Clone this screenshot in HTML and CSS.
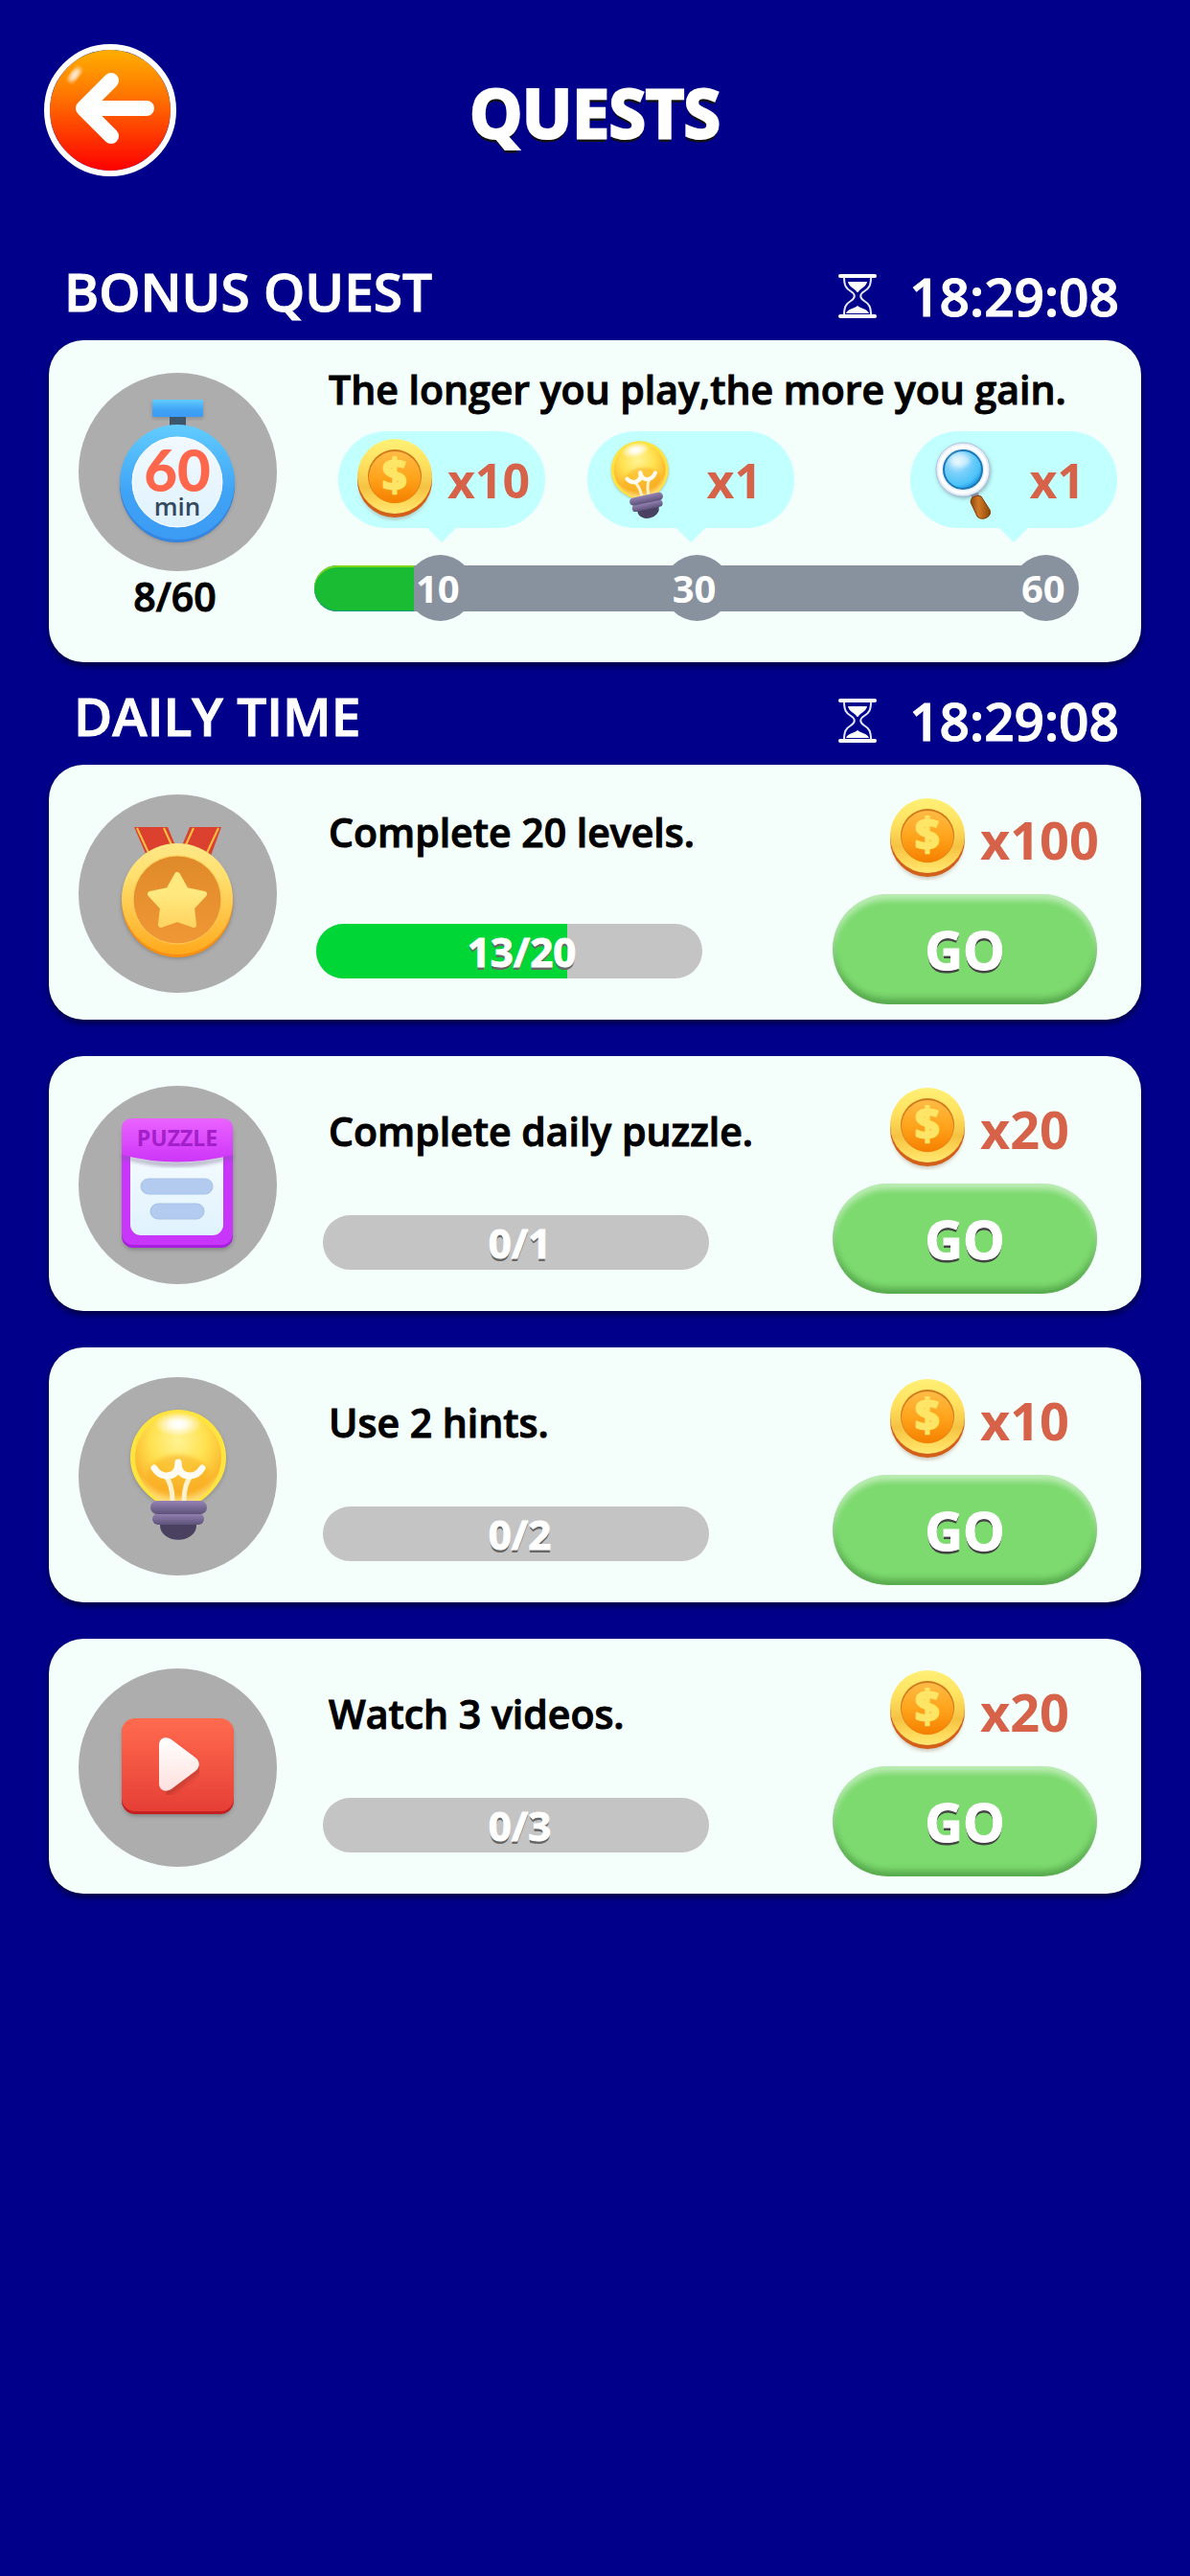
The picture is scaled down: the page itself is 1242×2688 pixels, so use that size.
FILE: index.html
```html
<!DOCTYPE html>
<html lang="en">
<head>
    <meta charset="UTF-8">
    <meta name="viewport" content="width=device-width, initial-scale=1.0">
    <title>Quests</title>
    <link rel="stylesheet" href="styles.css">
</head>
<body>
    <!-- shared icons -->
    <svg class="sprite" aria-hidden="true">
        <defs>
            <linearGradient id="coin-rim" x1="0" y1="0" x2="0" y2="1">
                <stop offset="0" stop-color="#fff176"/>
                <stop offset="0.35" stop-color="#ffe05e"/>
                <stop offset="0.65" stop-color="#f5c243"/>
                <stop offset="0.85" stop-color="#ffd95a"/>
                <stop offset="1" stop-color="#ffe873"/>
            </linearGradient>
            <linearGradient id="coin-face" x1="0" y1="0" x2="0" y2="1">
                <stop offset="0" stop-color="#ffbb45"/>
                <stop offset="0.5" stop-color="#ffa41c"/>
                <stop offset="1" stop-color="#f57f00"/>
            </linearGradient>
            <radialGradient id="glass" cx="0.5" cy="0.3" r="0.72">
                <stop offset="0" stop-color="#fff394"/>
                <stop offset="0.45" stop-color="#ffe14f"/>
                <stop offset="0.8" stop-color="#fbb72e"/>
                <stop offset="1" stop-color="#ffe488"/>
            </radialGradient>
            <radialGradient id="shine">
                <stop offset="0" stop-color="#fff"/>
                <stop offset="0.3" stop-color="#fff" stop-opacity="0.9"/>
                <stop offset="1" stop-color="#fff" stop-opacity="0"/>
            </radialGradient>
            <linearGradient id="bulb-base" x1="0" y1="0" x2="0" y2="1">
                <stop offset="0" stop-color="#9583b5"/>
                <stop offset="1" stop-color="#5d5279"/>
            </linearGradient>
            <filter id="soft"><feGaussianBlur stdDeviation="2"/></filter>
        </defs>
        <symbol id="coin" viewBox="0 0 78 86">
            <ellipse cx="39" cy="46" rx="37" ry="38" fill="#7a4a2a" opacity="0.35" filter="url(#soft)"/>
            <circle cx="39" cy="43" r="39" fill="#d2601a"/>
            <circle cx="39" cy="39" r="39" fill="url(#coin-rim)"/>
            <circle cx="39" cy="39" r="28" fill="#cf7a1d"/>
            <circle cx="39" cy="40" r="27" fill="url(#coin-face)"/>
            <text class="coin-sign" x="39" y="55" text-anchor="middle">$</text>
        </symbol>
        <symbol id="bulb" viewBox="44 24 120 155">
            <path d="M104 36a50 50 0 0 0-50 50c0 22 13 35 28 46h44c15-11 28-24 28-46a50 50 0 0 0-50-50z" fill="#555" opacity="0.35" filter="url(#soft)"/>
            <path d="M104 34a50 50 0 0 0-50 50c0 21 13 36 29 47h42c16-11 29-26 29-47a50 50 0 0 0-50-50z" fill="#ffe33f"/>
            <path d="M104 39a45 45 0 0 0-45 45c0 19 12 35 28 47h34c16-12 28-28 28-47a45 45 0 0 0-45-45z" fill="url(#glass)"/>
            <ellipse cx="104" cy="103" rx="32" ry="22" fill="#f9a81b" opacity="0.5" filter="url(#soft)"/>
            <ellipse cx="104" cy="49" rx="25" ry="13" fill="url(#shine)"/>
            <path d="M90 102q8 9 8 27M118 102q-8 9-8 27" fill="none" stroke="#fff3cf" stroke-width="5"/>
            <path d="M79 95q5 8 13 8 12 0 12-14 0 14 12 14 8 0 13-8" fill="none" stroke="#fffdf3" stroke-width="7" stroke-linecap="round" stroke-linejoin="round"/>
            <path d="M85 152h38v3a18 14 0 0 1-38 0z" fill="#4a4060"/>
            <rect x="77" y="142" width="54" height="12" rx="6" fill="url(#bulb-base)"/>
            <rect x="75" y="129" width="59" height="14" rx="7" fill="url(#bulb-base)"/>
        </symbol>
        <symbol id="hourglass" viewBox="0 0 40 46">
            <path d="M2 2h36M2 44h36" stroke="#fff" stroke-width="4" stroke-linecap="round"/>
            <path d="M6 3c0 9 2 12 7 15 5 3 5 7 0 10-5 3-7 6-7 15M34 3c0 9-2 12-7 15-5 3-5 7 0 10 5 3 7 6 7 15" fill="none" stroke="#e6e6ff" stroke-width="2"/>
            <path d="M10 8h20c-1 5-5 6-8 9-1 1-1 2-2 2s-1-1-2-2c-3-3-7-4-8-9zM8 41c2-5 9-5 12-8 3 3 10 3 12 8z" fill="#fff"/>
        </symbol>
    </svg>

    <header class="topbar">
        <button type="button" class="back" aria-label="Back">
            <svg viewBox="0 0 126 126" aria-hidden="true">
                <ellipse cx="26" cy="26" rx="4" ry="9" transform="rotate(38 26 26)" fill="#fff" opacity="0.85" filter="url(#soft)"/>
                <path d="M101 61H36M64 32L35 61l29 29" fill="none" stroke="#fff" stroke-width="16" stroke-linecap="round" stroke-linejoin="round"/>
            </svg>
        </button>
        <h1>QUESTS</h1>
    </header>

    <main>
        <div class="section-head">
            <h2>BONUS QUEST</h2>
            <div class="countdown">
                <svg class="hourglass" aria-hidden="true"><use href="#hourglass"/></svg>
                <time>18:29:08</time>
            </div>
        </div>

        <section class="card bonus">
            <div class="bonus-side">
                <div class="disc">
                    <svg viewBox="0 0 207 207" aria-label="60 min">
                        <defs>
                            <linearGradient id="watch" x1="0" y1="0" x2="0" y2="1">
                                <stop offset="0" stop-color="#62ccff"/>
                                <stop offset="0.6" stop-color="#3fa3f5"/>
                                <stop offset="1" stop-color="#3c9bf4"/>
                            </linearGradient>
                            <linearGradient id="dial" x1="0" y1="0" x2="0" y2="1">
                                <stop offset="0" stop-color="#f2f9ff"/>
                                <stop offset="1" stop-color="#dff2fd"/>
                            </linearGradient>
                        </defs>
                        <rect x="77" y="30" width="53" height="18" fill="#666" opacity="0.4" filter="url(#soft)"/>
                        <rect x="95" y="44" width="17" height="12" fill="#3d566b"/>
                        <rect x="77" y="28" width="53" height="18" rx="1" fill="url(#watch)"/>
                        <circle cx="103" cy="118" r="59" fill="#555" opacity="0.5" filter="url(#soft)"/>
                        <circle cx="103" cy="117" r="60" fill="#3585e0"/>
                        <circle cx="103" cy="114" r="60" fill="url(#watch)"/>
                        <circle cx="103" cy="114" r="47" fill="url(#dial)" stroke="#fff"/>
                        <text class="watch-number" x="103" y="124" text-anchor="middle">60</text>
                        <text class="watch-unit" x="103" y="149" text-anchor="middle">min</text>
                    </svg>
                </div>
                <p class="bonus-count">8/60</p>
            </div>
            <div class="bonus-body">
                <h3>The longer you play,the more you gain.</h3>
                <ul class="rewards">
                    <li><svg class="coin" aria-hidden="true"><use href="#coin"/></svg><span>x10</span></li>
                    <li>
                        <svg class="small-icon" viewBox="0 0 74 84" aria-hidden="true">
                            <g transform="rotate(-12 37 42)"><use href="#bulb" x="1" y="-5" width="72" height="93"/></g>
                        </svg>
                        <span>x1</span>
                    </li>
                    <li>
                        <svg class="small-icon" viewBox="0 0 74 84" aria-hidden="true">
                            <defs>
                                <radialGradient id="lens" cx="0.35" cy="0.3" r="0.75">
                                    <stop offset="0" stop-color="#d6f1ff"/>
                                    <stop offset="0.4" stop-color="#7bd0fa"/>
                                    <stop offset="0.8" stop-color="#4cc3f8"/>
                                    <stop offset="1" stop-color="#1c8fdc"/>
                                </radialGradient>
                                <linearGradient id="wood" x1="0" y1="0" x2="1" y2="0">
                                    <stop offset="0" stop-color="#8f4708"/>
                                    <stop offset="0.4" stop-color="#d07a28"/>
                                    <stop offset="1" stop-color="#8f4708"/>
                                </linearGradient>
                            </defs>
                            <circle cx="36" cy="33" r="28" fill="#456" opacity="0.45" filter="url(#soft)"/>
                            <circle cx="35" cy="31" r="28" fill="#e9effa" stroke="#b4c3d8"/>
                            <circle cx="35" cy="31" r="24" fill="none" stroke="#fff" stroke-width="3"/>
                            <circle cx="35" cy="31" r="20" fill="url(#lens)" stroke="#1878b8" stroke-width="2"/>
                            <ellipse cx="32" cy="21" rx="11" ry="7" fill="#fff" opacity="0.5" filter="url(#soft)"/>
                            <rect x="44" y="56" width="8" height="6" fill="#8b8fa6" transform="rotate(-20 48 59)"/>
                            <path d="M45 60q5-3 9-1l9 14q2 5-3 8-6 3-10-1l-7-15q0-3 2-5z" fill="url(#wood)" stroke="#7d3f0a"/>
                        </svg>
                        <span>x1</span>
                    </li>
                </ul>
                <div class="track" role="progressbar" aria-label="Minutes played" aria-valuenow="8" aria-valuemin="0" aria-valuemax="60">
                    <div class="milestone" style="left: 16.5%">10</div>
                    <div class="milestone" style="left: 50%">30</div>
                    <div class="milestone" style="left: 95.6%">60</div>
                    <div class="track-fill" style="width: 13%"></div>
                </div>
            </div>
        </section>

        <div class="section-head daily">
            <h2>DAILY TIME</h2>
            <div class="countdown">
                <svg class="hourglass" aria-hidden="true"><use href="#hourglass"/></svg>
                <time>18:29:08</time>
            </div>
        </div>

        <div class="quest-list">
            <section class="card quest started">
                <div class="disc">
                    <svg viewBox="0 0 207 207" aria-hidden="true">
                        <defs>
                            <linearGradient id="medal-rim" x1="0" y1="0" x2="0" y2="1">
                                <stop offset="0" stop-color="#ffe787"/>
                                <stop offset="0.3" stop-color="#ffdf6e"/>
                                <stop offset="1" stop-color="#ffa91c"/>
                            </linearGradient>
                            <linearGradient id="medal-face" x1="0" y1="0" x2="0" y2="1">
                                <stop offset="0" stop-color="#df8a2a"/>
                                <stop offset="1" stop-color="#f09735"/>
                            </linearGradient>
                            <linearGradient id="star" x1="0" y1="0" x2="0" y2="1">
                                <stop offset="0.4" stop-color="#ffe87e"/>
                                <stop offset="1" stop-color="#ffd562"/>
                            </linearGradient>
                        </defs>
                        <path d="M58 34h35l10 24-32 6zM149 34h-33l-10 24 32 6z" fill="#dc4130"/>
                        <path d="M61 35l13 28M89 35l10 22M146 35l-13 28M120 35l-10 22" stroke="#ffc23e" stroke-width="2"/>
                        <circle cx="103" cy="113" r="58" fill="#555" opacity="0.5" filter="url(#soft)"/>
                        <circle cx="103" cy="112" r="58" fill="#f78f14"/>
                        <circle cx="103" cy="109" r="58" fill="url(#medal-rim)"/>
                        <circle cx="103" cy="110" r="46" fill="url(#medal-face)" stroke="#ffcb55"/>
                        <path d="M103 84l9 16 19 4-13 14 2 18-17-6-17 6 2-18-13-14 19-4z" fill="url(#star)" stroke="url(#star)" stroke-width="6" stroke-linejoin="round"/>
                    </svg>
                </div>
                <div class="quest-body">
                    <h3>Complete 20 levels.</h3>
                    <div class="bar" role="progressbar" aria-label="Levels completed" aria-valuenow="13" aria-valuemin="0" aria-valuemax="20">
                        <div class="bar-fill" style="width: 65%"></div>
                        <span class="bar-label">13/20</span>
                    </div>
                </div>
                <div class="quest-side">
                    <p class="prize"><svg class="coin" aria-hidden="true"><use href="#coin"/></svg>x100</p>
                    <button type="button" class="go">GO</button>
                </div>
            </section>

            <section class="card quest">
                <div class="disc">
                    <svg viewBox="0 0 207 207" aria-hidden="true">
                        <defs>
                            <linearGradient id="flap" x1="0" y1="0" x2="0" y2="1">
                                <stop offset="0" stop-color="#ea63ff"/>
                                <stop offset="1" stop-color="#cd35f8"/>
                            </linearGradient>
                            <linearGradient id="paper" x1="0" y1="0" x2="0" y2="1">
                                <stop offset="0" stop-color="#f7fcff"/>
                                <stop offset="1" stop-color="#dff2fd"/>
                            </linearGradient>
                        </defs>
                        <rect x="46" y="38" width="115" height="133" rx="12" fill="#555" opacity="0.5" filter="url(#soft)"/>
                        <rect x="45" y="36" width="116" height="133" rx="12" fill="#a91fe0"/>
                        <rect x="45" y="36" width="116" height="130" rx="12" fill="#c836fa"/>
                        <rect x="54" y="60" width="97" height="96" rx="11" fill="url(#paper)"/>
                        <path d="M45 72q58 16 116 0v3q-58 18-116 0z" fill="#71628a" opacity="0.6" filter="url(#soft)"/>
                        <path d="M57 34h92q12 0 12 11v27q-58 15-116 0V45q0-11 12-11z" fill="url(#flap)"/>
                        <text class="puzzle-name" x="103" y="63" text-anchor="middle">PUZZLE</text>
                        <rect x="65" y="97" width="75" height="16" rx="8" fill="#b2cbef" stroke="#a5c3e8"/>
                        <rect x="75" y="123" width="56" height="16" rx="8" fill="#b2cbef" stroke="#a5c3e8"/>
                    </svg>
                </div>
                <div class="quest-body">
                    <h3>Complete daily puzzle.</h3>
                    <div class="bar" role="progressbar" aria-label="Puzzles completed" aria-valuenow="0" aria-valuemin="0" aria-valuemax="1">
                        <span class="bar-label">0/1</span>
                    </div>
                </div>
                <div class="quest-side">
                    <p class="prize"><svg class="coin" aria-hidden="true"><use href="#coin"/></svg>x20</p>
                    <button type="button" class="go">GO</button>
                </div>
            </section>

            <section class="card quest">
                <div class="disc">
                    <svg viewBox="0 0 207 207" aria-hidden="true"><use href="#bulb" x="44" y="24" width="120" height="155"/></svg>
                </div>
                <div class="quest-body">
                    <h3>Use 2 hints.</h3>
                    <div class="bar" role="progressbar" aria-label="Hints used" aria-valuenow="0" aria-valuemin="0" aria-valuemax="2">
                        <span class="bar-label">0/2</span>
                    </div>
                </div>
                <div class="quest-side">
                    <p class="prize"><svg class="coin" aria-hidden="true"><use href="#coin"/></svg>x10</p>
                    <button type="button" class="go">GO</button>
                </div>
            </section>

            <section class="card quest">
                <div class="disc">
                    <svg viewBox="0 0 207 207" aria-hidden="true">
                        <defs>
                            <linearGradient id="video" x1="0" y1="0" x2="0" y2="1">
                                <stop offset="0" stop-color="#ff6b4f"/>
                                <stop offset="1" stop-color="#e63f36"/>
                            </linearGradient>
                            <linearGradient id="play" x1="0" y1="0" x2="0" y2="1">
                                <stop offset="0" stop-color="#ffffff"/>
                                <stop offset="1" stop-color="#fde0dd"/>
                            </linearGradient>
                        </defs>
                        <rect x="46" y="56" width="115" height="98" rx="14" fill="#555" opacity="0.5" filter="url(#soft)"/>
                        <rect x="45" y="54" width="117" height="98" rx="14" fill="#c61f22"/>
                        <rect x="45" y="52" width="117" height="97" rx="14" fill="url(#video)"/>
                        <path d="M94 82l29 22-29 23z" fill="#8c2a20" stroke="#8c2a20" stroke-width="12" stroke-linejoin="round" opacity="0.35" filter="url(#soft)"/>
                        <path d="M84 80c0-8 8-10 14-5l24 18c5 4 5 10 0 14l-24 18c-6 5-14 3-14-5z" fill="url(#play)"/>
                    </svg>
                </div>
                <div class="quest-body">
                    <h3>Watch 3 videos.</h3>
                    <div class="bar" role="progressbar" aria-label="Videos watched" aria-valuenow="0" aria-valuemin="0" aria-valuemax="3">
                        <span class="bar-label">0/3</span>
                    </div>
                </div>
                <div class="quest-side">
                    <p class="prize"><svg class="coin" aria-hidden="true"><use href="#coin"/></svg>x20</p>
                    <button type="button" class="go">GO</button>
                </div>
            </section>
        </div>
    </main>
</body>
</html>
```

FILE: styles.css
```css
* {
    box-sizing: border-box;
}
body {
    margin: 0;
    min-height: 100vh;
    background-color: #00008b;
    color: #fff;
    font-family: "Open Sans", "Noto Sans", sans-serif;
}
h1, h2, h3, p, ul {
    margin: 0;
    padding: 0;
}
.sprite {
    position: absolute;
    width: 0;
    height: 0;
}

/* top bar */
.topbar {
    display: grid;
    grid-template-columns: 138px 1fr 138px;
    align-items: center;
    padding: 46px 46px 0;
}
.back {
    width: 138px;
    height: 138px;
    padding: 0;
    border: 6px solid #fff;
    border-radius: 50%;
    background: linear-gradient(#ffae00, #ff7a00 35%, #fd0000) padding-box;
    cursor: pointer;
}
.back svg {
    display: block;
}
h1 {
    padding-top: 4px;
    text-align: center;
    font-size: 69px;
    line-height: 96px;
    font-weight: 700;
    -webkit-text-stroke: 3px #fff;
    text-shadow: 0 4px 0 #111;
}

/* section titles */
main {
    padding: 0 51px;
}
.section-head {
    display: flex;
    justify-content: space-between;
    align-items: flex-end;
    margin: 88px 23px 14px 16px;
}
.section-head.daily {
    margin-top: 24px;
    margin-left: 26px;
}
h2 {
    padding-bottom: 5px;
    font-size: 55px;
    line-height: 64px;
    font-weight: 600;
    -webkit-text-stroke: 1px #fff;
}
.countdown {
    display: flex;
    align-items: center;
    gap: 34px;
    font-size: 55px;
    line-height: 64px;
    font-weight: 600;
    -webkit-text-stroke: 1px #fff;
}
.hourglass {
    width: 40px;
    height: 46px;
}

/* cards */
.card {
    display: grid;
    border-radius: 36px;
    background-color: #f4fefa;
    box-shadow: 0 4px 6px rgba(0, 0, 0, 0.5);
    color: #000;
}
.disc {
    width: 207px;
    height: 207px;
    border-radius: 50%;
    background-color: #adadad;
}
.disc svg {
    display: block;
}
h3 {
    font-size: 41px;
    line-height: 48px;
    font-weight: 600;
    -webkit-text-stroke: 1px #000;
}
.coin {
    width: 78px;
    height: 86px;
}

/* bonus quest */
.bonus {
    grid-template-columns: 207px 1fr;
    column-gap: 39px;
    padding: 27px 25px 42px 31px;
}
.bonus-side {
    padding-top: 7px;
}
.bonus-count {
    padding-right: 6px;
    font-size: 41px;
    line-height: 53px;
    font-weight: 600;
    text-align: center;
    -webkit-text-stroke: 1px #000;
}
.bonus-body h3 {
    padding-left: 15px;
}
.rewards {
    display: flex;
    gap: 44px;
    margin: 20px 0 39px 25px;
    list-style: none;
}
.rewards li {
    position: relative;
    display: flex;
    justify-content: space-between;
    align-items: center;
    width: 216px;
    height: 101px;
    padding: 0 16px 0 20px;
    border-radius: 50px;
    background-color: #c2ffff;
    color: #d6624a;
    font-size: 50px;
    line-height: 60px;
    font-weight: 700;
}
.rewards li:not(:first-child) {
    padding-right: 34px;
}
.rewards li:last-child {
    margin-left: auto;
}
.rewards li::after {
    content: "";
    position: absolute;
    top: 100%;
    left: 50%;
    margin-left: -15px;
    border: 15px solid transparent;
    border-top-color: #c2ffff;
    border-bottom: 0;
}
.small-icon {
    width: 74px;
    height: 84px;
}
.track {
    position: relative;
    height: 48px;
    margin-right: 39px;
    border-radius: 24px;
    background: linear-gradient(90deg, #87929e 95%, transparent 95%);
}
.track-fill {
    position: relative;
    height: 48px;
    border-radius: 24px 0 0 24px;
    background-color: #1abc33;
    box-shadow: inset 0 2px 0 #7fd61f, inset 0 -1px 0 #149c7c;
}
.milestone {
    position: absolute;
    top: 50%;
    width: 69px;
    height: 69px;
    margin: -35px 0 0 -35px;
    padding-right: 5px;
    border-radius: 50%;
    background-color: #87929e;
    color: #fff;
    font-size: 40px;
    line-height: 69px;
    font-weight: 700;
    text-align: center;
}

/* daily quests */
.quest-list {
    display: grid;
    gap: 38px;
}
.quest {
    grid-template-columns: 207px 1fr 276px;
    column-gap: 48px;
    padding: 31px 46px 18px 31px;
}
.quest.started {
    padding-bottom: 16px;
}
.quest-body h3 {
    padding: 23px 0 0 6px;
}
.bar {
    display: grid;
    align-items: center;
    max-width: 403px;
    height: 57px;
    margin-top: 64px;
    border-radius: 29px;
    background-color: #c4c4c4;
    overflow: hidden;
}
.bar-fill,
.bar-label {
    grid-area: 1 / 1;
}
.bar-fill {
    height: 57px;
    background-color: #00d636;
}
.bar-label {
    position: relative;
    padding-left: 8px;
    color: #fff;
    font-size: 42px;
    line-height: 54px;
    font-weight: 700;
    text-align: center;
    text-shadow: 0 3px 0 #666;
    -webkit-text-stroke: 1px #fff;
}
.quest.started h3 {
    padding-top: 15px;
}
.started .bar {
    margin-top: 72px;
    margin-left: -7px;
}
.started .bar-label {
    padding-left: 26px;
}
.prize {
    display: flex;
    align-items: center;
    gap: 16px;
    height: 86px;
    margin: 2px 0 14px 60px;
    color: #d6624a;
    font-size: 54px;
    line-height: 64px;
    font-weight: 700;
}
.started .prize {
    margin-top: 4px;
}
.coin {
    flex-shrink: 0;
}
.go {
    display: block;
    width: 100%;
    height: 115px;
    padding: 0;
    border: 0;
    border-radius: 58px;
    background-color: #7cda6e;
    box-shadow: inset 0 6px 6px rgba(255, 255, 255, 0.5), inset 0 -6px 6px rgba(0, 60, 0, 0.3);
    color: #fff;
    font-family: inherit;
    font-size: 55px;
    line-height: 64px;
    font-weight: 700;
    text-shadow: 0 3px 0 #444;
    -webkit-text-stroke: 1px #fff;
    cursor: pointer;
}

/* lettering inside the icons */
.coin-sign {
    font-size: 46px;
    font-weight: 700;
    fill: #ffe566;
    stroke: #ffe566;
    stroke-width: 2px;
    stroke-linejoin: round;
}
.watch-number {
    font-family: Lato, sans-serif;
    font-size: 60px;
    font-weight: 900;
    fill: #ff674c;
}
.watch-unit {
    font-size: 26px;
    font-weight: 600;
    fill: #34495e;
}
.puzzle-name {
    font-size: 23px;
    font-weight: 700;
    fill: #a31fc9;
}
```
